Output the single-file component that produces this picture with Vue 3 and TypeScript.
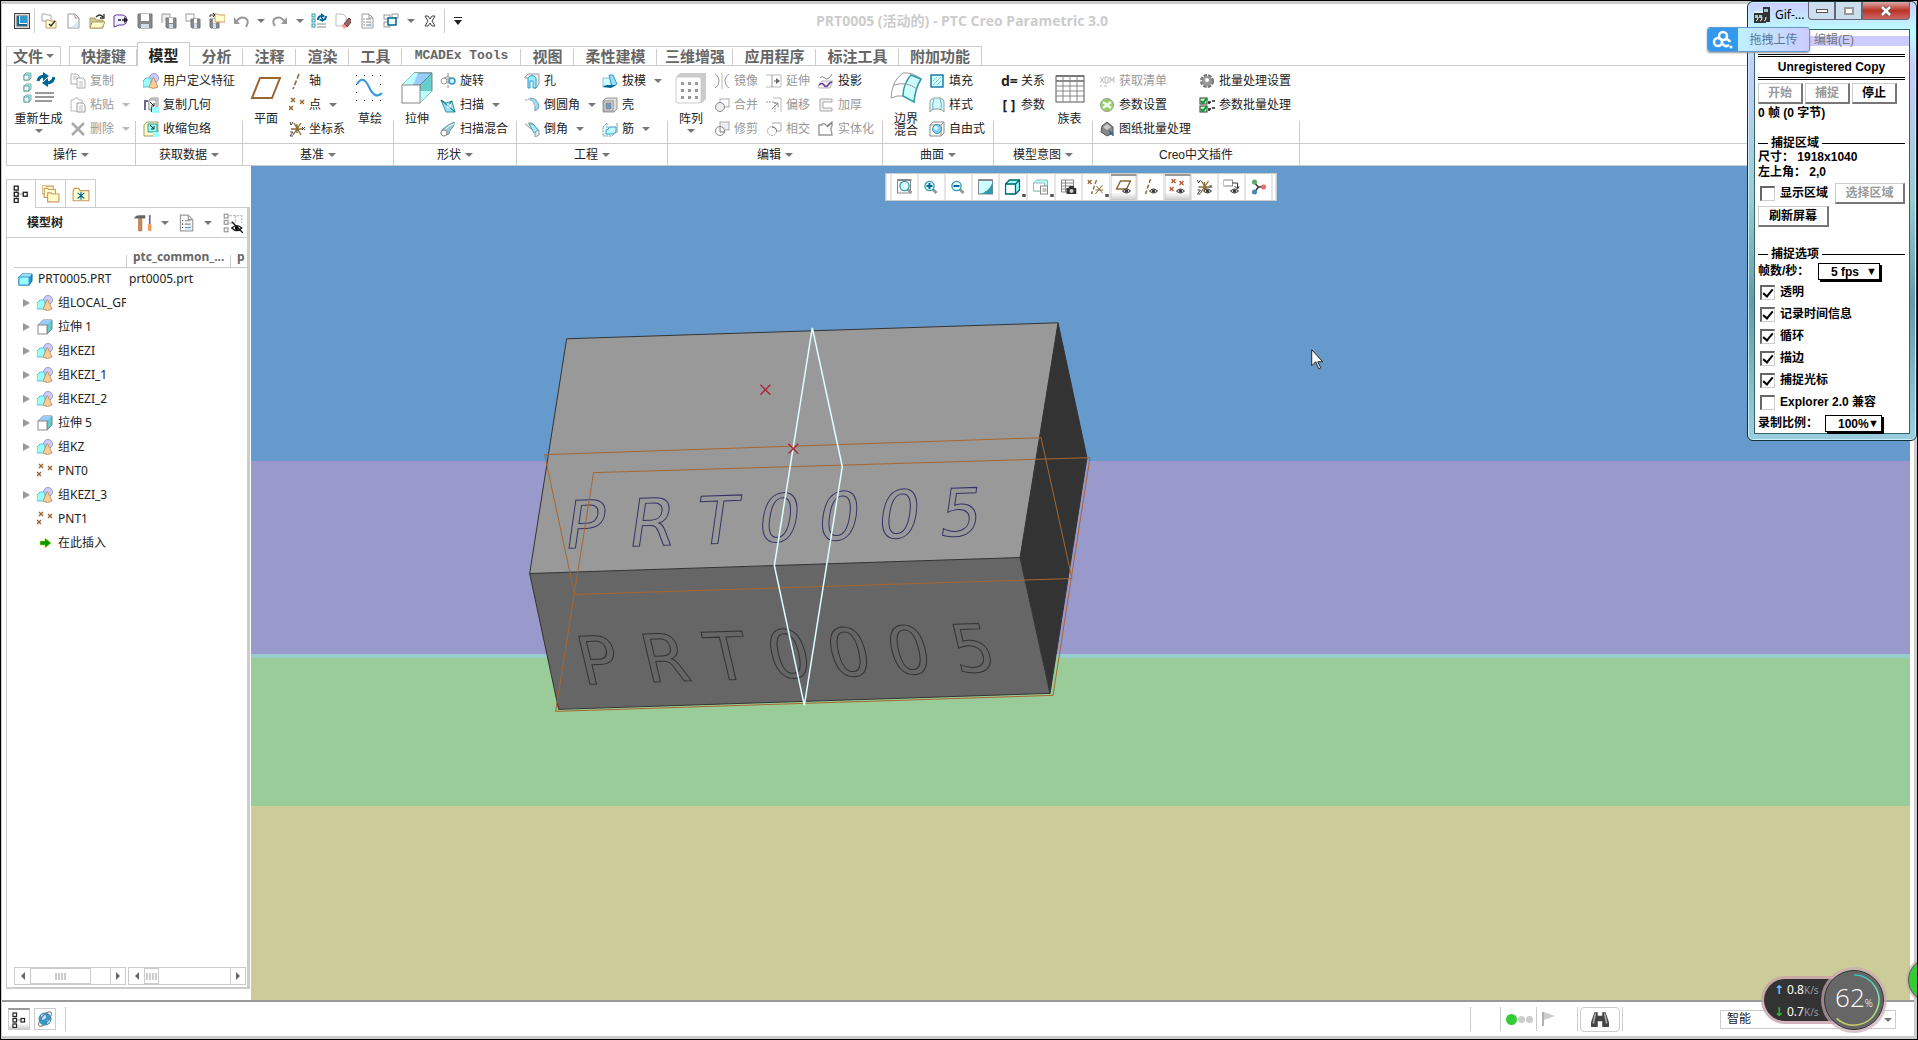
<script setup lang="ts">
import { ref } from 'vue'

/* Inner markup of the icons; small ones use a 16 x 16 box, big ones 32 x 32. */
const cube = (x: number, y: number) =>
  `<path d="M${x} ${y + 2}l2-2h5v5l-2 2h-5z" fill="#9ff" stroke="#8aa"/><rect x="${x}" y="${y + 2}" width="5" height="5" fill="#eff" stroke="#699"/>`
const star = (x: number, y: number, c: string) => `<path d="M${x} ${y}l4 4m0-4l-4 4" stroke="${c}" stroke-width="1.4"/>`
const eye = '<path d="M7 12q4-4 8 0q-4 4-8 0z" fill="#ccc" stroke="#333"/><circle cx="11" cy="12" r="1.6" fill="#333"/>'
const solid =
  '<circle cx="11" cy="5" r="4.5" fill="#ccf" stroke="#99c"/><path d="M0 8l3-3h5v7l-2 2H0z" fill="#9ff" stroke="#6bc"/><path d="M10.500 4l4.500 10q-5 3-9 0z" fill="#fc9" stroke="#b96"/>'
const lens = (x: number) =>
  `<path d="M${x + 3} 10l4 4" stroke="#999" stroke-width="3"/><circle cx="${x}" cy="7" r="4.6" fill="#dff" stroke="#39a" stroke-width="1.3"/>`
const disk = (x: number, y: number, s: number) =>
  `<path d="M${x} ${y}h${s}v${s}h-${s - 1}l-1-1z" fill="#888" stroke="#777"/><rect x="${x + 3}" y="${y}" width="${s - 6}" height="${s / 2}" fill="#fff"/><rect x="${x + 3}" y="${y + s - 4}" width="${s - 6}" height="4" fill="#cde"/>`
const page = '<path d="M3 1h7l4 4v10H3z" fill="#fff" stroke="#999"/><path d="M10 1v4h4" fill="none" stroke="#999"/><path d="M13 8v6.500H6z" fill="#cef"/>'
const folder = (x: number, y: number) => `<path d="M${x} ${y}h3l1 1h6v7h-10z" fill="#ffc" stroke="#c96"/>`
const extrude = '<path d="M1 6l5-5h9v9l-5 5V6z" fill="#6cc" stroke="#688"/><path d="M1 6l5-5h9l-5 5z" fill="#9cf"/><rect x="1" y="6" width="9" height="9" fill="#fff" stroke="#888"/>'
const axes = '<path d="M5 2l7 12M12 2L4 14M2 8h12M8 3v9" stroke="#8a6a33" stroke-width="1.3" fill="none"/><path d="M1 1l1 3l2-3M1 11h3l-3 4h3M13 6l3 3m0-3l-3 3" stroke="#444" fill="none"/>'
const tree = '<path d="M4 4v8M4 8h7" stroke="#999"/><g fill="#fff" stroke="#222" stroke-width="1.200"><rect x="2" y="1" width="3.500" height="3.500"/><rect x="2" y="6.500" width="3.500" height="3.500"/><rect x="2" y="12" width="3.500" height="3.500"/><rect x="10" y="6.500" width="3.500" height="3.500"/></g>'

const icons: Record<string, string> = {
  creo: '<rect x=".5" y=".5" width="15" height="15" fill="#ddd" stroke="#444"/><rect x="3" y="3" width="10" height="10" fill="#069" stroke="#666"/><rect x="6" y="3" width="7" height="7" fill="#39c"/><path d="M5.500 3v7.500H13" stroke="#fff" fill="none"/>',
  folderCheck: '<path d="M1 1h4l1 1h4v6H1z" fill="#fff" stroke="#aaa"/>' + folder(5, 7) + '<path d="M8 11l2 2l4-5" stroke="#333" fill="none" stroke-width="1.500"/>',
  page,
  open: '<path d="M1 5h5l1 2h7v8H1z" fill="#cc9" stroke="#a96"/><path d="M3 9h13l-3 6H1z" fill="#ffc" stroke="#a96"/><path d="M7 4q4-4 7 0m1-3v4h-4" fill="none" stroke="#333" stroke-width="1.300"/>',
  session: '<path d="M1 3q3-2 5-1h4q4 1 4 5t-4 5H6l-5 2z" fill="#eef" stroke="#639"/><path d="M5 7h3m1 0h2" stroke="#222" stroke-width="1.500"/><path d="M11 4l4 3l-4 3z" fill="#222"/>',
  save: disk(1, 1, 14),
  saveAll: '<path d="M1 10V1h8v3" fill="#eee" stroke="#999"/>' + disk(5, 5, 10),
  saveTo: '<rect x="1" y="1" width="8" height="7" fill="#fff" stroke="#999"/>' + disk(6, 6, 9),
  saveOut: disk(1, 6, 9) + folder(6, 1) + '<path d="M1 4V2h4M4 0l2 2l-2 2" stroke="#333" fill="none"/>',
  undo: '<path d="M3 9q4-6 9-4t1 9" stroke="#999" stroke-width="2" fill="none"/><path d="M1 4v7h6z" fill="#999"/>',
  redo: '<path d="M13 9Q9 3 4 5T3 13" stroke="#999" stroke-width="2" fill="none"/><path d="M15 4v7H9z" fill="#999"/>',
  regen: '<g fill="#cff" stroke="#39a"><rect x="1" y="1" width="3" height="3"/><rect x="1" y="6" width="3" height="3"/><rect x="1" y="11" width="3" height="3"/></g><path d="M7 7q0-4 4-4M15 3q0 4-4 4" stroke="#069" stroke-width="2" fill="none"/><path d="M10 0l4 3l-4 3zM12 4l-4 3l4 2z" fill="#069"/><path d="M6 11h9M6 14h9" stroke="#888"/>',
  erase: '<path d="M1 1h7l3 3v4M1 1v12h5" fill="none" stroke="#bbb"/><path d="M14 5l-5 6l3 3l5-6z" fill="#966" stroke="#633"/><path d="M9 11l-3 1l3 4l3-2z" fill="#f99"/>',
  list: page + '<path d="M7 6h5M7 9h5M7 12h5" stroke="#888"/><path d="M4.500 6h1M4.500 9h1M4.500 12h1" stroke="#333"/>',
  windows: '<g fill="#fff" stroke="#999"><rect x="1" y="2" width="6" height="4"/><rect x="9" y="1" width="6" height="4"/><rect x="1" y="9" width="6" height="5"/></g><rect x="5" y="5" width="8" height="7" fill="#eff" stroke="#069" stroke-width="1.500"/>',
  close: '<path d="M3 3h3l2 3l2-3h3l-3 5l3 5h-3l-2-3l-2 3H3l3-5z" fill="#fff" stroke="#444"/>',
  copy: '<g fill="#fff" stroke="#aaa"><path d="M1 1h6l2 2v8H1z"/><path d="M7 5h6l2 2v8H7z"/></g><path d="M3 4h4M3 6h4M9 9h4M9 11h4M9 13h4" stroke="#bbb"/>',
  paste: '<path d="M1 3h3l1-2h3l1 2h3v11H1z" fill="#fff" stroke="#bbb"/><path d="M7 6h6l2 2v7H7z" fill="#fff" stroke="#999"/><path d="M9 9h4M9 11h4M9 13h4" stroke="#bbb"/>',
  del: '<path d="M2 2l12 12M14 2L2 14" stroke="#aaa" stroke-width="2.500"/>',
  solid,
  copyGeo: '<path d="M6 3l2-2h7v10l-2 2H6z" fill="#ddd" stroke="#999"/><path d="M6 3h7v9H6z" fill="#fff" stroke="#999"/><path d="M7 5l4 4m0-3v3H8" stroke="#222" fill="none"/><path d="M9 10h7v6H9z" fill="#9ff"/><path d="M1 3h4v2H3v8H1z" fill="#669"/><path d="M8 10h1v5H8z" fill="#066"/>',
  shrink: '<path d="M1 4l3-3h11v11l-3 3H1z" fill="#ffc" stroke="#996"/><path d="M5 3h9v8H5z" fill="#9ff" stroke="#399"/><path d="M7 4l4 4m0-3v3H8" stroke="#222" fill="none"/><path d="M10 11h6v5h-6z" fill="#9ff"/>',
  axis: '<path d="M10 1L4 16" stroke="#8a6a33" stroke-width="1.600" stroke-dasharray="5 2"/>',
  point: star(2, 1, '#963') + star(11, 3, '#963') + star(0, 9, '#963'),
  csys: axes,
  revolve: '<circle cx="4" cy="8" r="3" fill="#fff" stroke="#999"/><circle cx="12" cy="8" r="3" fill="#cef" stroke="#39c" stroke-width="1.500"/><path d="M8 0v16" stroke="#888" stroke-dasharray="3 1"/><path d="M4 5q4-3 7 0" fill="none" stroke="#999"/>',
  sweep: '<path d="M1 3l5 3l6-2l3 11H6z" fill="#9df" stroke="#399"/><path d="M1 3l7 6l7 6M8 9l4-5" fill="none" stroke="#066"/><rect x="7" y="7" width="4" height="4" fill="#fff" opacity=".6"/>',
  blend: '<path d="M3 15q-4-3 0-7T14 1q1 3-2 6t-3 6z" fill="#9cd" stroke="#699"/><circle cx="4" cy="12" r="3" fill="#fff" stroke="#888"/><path d="M6 8q3-4 8-5" stroke="#fff" fill="none"/>',
  hole: '<path d="M1 4l3-3h11v10l-3 4h-2V5H1z" fill="#eee" stroke="#999"/><path d="M4 5q4-5 8 0v10H9V8H6v7H4z" fill="#9ef" stroke="#39c"/>',
  round: '<path d="M1 3q8-3 10 7v4q4-2 4-5Q13 1 6 1" fill="#9df" stroke="#79a"/><path d="M1 3q8-3 10 7" fill="none" stroke="#ccc"/>',
  chamfer: '<path d="M4 2h4l7 8v4l-4 2v-5L1 3" fill="#dee" stroke="#999"/><path d="M5 3h4l5 6l-4 3z" fill="#9ef" stroke="#69a"/>',
  draft: '<path d="M1 5h8v8H1z" fill="#cff" stroke="#9bc"/><path d="M7 2h4l4 9l-5 3z" fill="#9df" stroke="#39c"/><path d="M0 14l5-2h9l-5 3z" fill="#069"/>',
  shell: '<path d="M1 4l3-3h11v11l-3 3H1z" fill="#ddd" stroke="#999"/><rect x="2" y="4" width="9" height="10" fill="#eee" stroke="#888"/><rect x="4" y="6" width="5" height="6" fill="#69c" stroke="#888"/>',
  rib: '<path d="M1 6l4-4v9h9l-4 4H1z" fill="#eff" stroke="#69a" stroke-dasharray="2 1"/><path d="M4 9q3 0 3-3h7v5l-3 2H4z" fill="#bff" stroke="#39c"/><path d="M15 2v10" stroke="#999"/>',
  mirror: '<path d="M8 0v16" stroke="#bbb"/><path d="M1 1q3 1 4 6v1q0 5-4 7M15 1q-3 1-4 6v1q0 5 4 7" fill="none" stroke="#999"/>',
  merge: '<rect x="6" y="2" width="9" height="8" fill="#fff" stroke="#aaa"/><circle cx="6" cy="10" r="4.500" fill="#eee" stroke="#888"/>',
  trim: '<rect x="6" y="1" width="9" height="8" fill="#eee" stroke="#aaa"/><circle cx="6" cy="10" r="4.500" fill="#fff" stroke="#888"/><path d="M6 6v5h5" fill="none" stroke="#777"/>',
  extend: '<path d="M0 2h15v12H0" fill="none" stroke="#bbb"/><path d="M6 2v12" stroke="#999"/><path d="M8 8h3" stroke="#666"/><path d="M10 5l4 3l-4 3z" fill="#666"/>',
  offset: '<path d="M0 5h9M9 5v10" stroke="#999" stroke-dasharray="2 1" fill="none"/><path d="M7 1h8v14" stroke="#bbb" fill="none"/><path d="M6 12l6-6m-4 0h4v4" fill="none" stroke="#888"/>',
  intersect: '<path d="M6 2h9v8h-4" fill="none" stroke="#aaa"/><circle cx="6" cy="10" r="4.500" fill="none" stroke="#999" stroke-dasharray="2 1"/><path d="M6 6q4 0 5 4" stroke="#777" fill="none"/>',
  project: '<path d="M2 5q2-3 5 0t7-4" fill="none" stroke="#888"/><path d="M0 13l4-5h11l-3 7H1z" fill="#eee" stroke="#bbb"/><path d="M1 12q3-3 5 0t4 0t4-3" fill="none" stroke="#639" stroke-width="1.500"/>',
  thicken: '<path d="M14 2H2v12h12v-3H5V5h9z" fill="#eee" stroke="#aaa"/>',
  solidify: '<path d="M1 4h3q0-2 3-1l2 2l5-4v4q-1 1-1 3l1 6H1z" fill="#fff" stroke="#999" stroke-width="1.400"/><path d="M9 6l5-4" stroke="#666"/>',
  fill: '<rect x="2" y="2" width="12" height="12" fill="#cff" stroke="#069" stroke-width="1.300"/><path d="M4 8l4-4M4 12l8-8M8 12l4-4" stroke="#9cd"/>',
  style: '<path d="M1 5q0-3 4-4h6q4 1 4 4v10q-2-3-5-3H6q-4 0-5 3z" fill="#cff" stroke="#999"/><path d="M5 2q-2 5-1 10M11 2q2 5 1 10" stroke="#7ac" fill="none"/>',
  free: '<path d="M1 4l3-3h11v11l-3 3H1zM1 4h11v11M12 4l3-3" fill="none" stroke="#888"/><circle cx="8" cy="8" r="4.500" fill="#8cf" stroke="#39a"/><circle cx="7" cy="7" r="2" fill="#dff"/>',
  bom: '<path d="M1 4l4 6m0-6l-4 6M6 4v6h3V4H6M11 10V4l2 4l2-4v6M1 13h2m2 0h3" stroke="#bbb" fill="none"/>',
  ball: '<circle cx="8" cy="8" r="6.500" fill="#9c6" stroke="#999"/><path d="M4 5l8 6M12 5l-8 6" stroke="#efe" stroke-width="2.500"/>',
  plot: '<path d="M3 5l5-4l6 5v6l-6 3l-6-4z" fill="#888" stroke="#555"/><path d="M4 6l4-3l4 3l-4 3z" fill="#ccc"/><path d="M10 10l4 3m-4 0h4v2" stroke="#369" stroke-width="1.500" fill="none"/>',
  gear: '<circle cx="8" cy="8" r="5" fill="#aaa" stroke="#777" stroke-width="4" stroke-dasharray="3 1"/><circle cx="8" cy="8" r="5" fill="#999"/><circle cx="8" cy="7" r="2" fill="#fff"/>',
  checks: '<rect x="1" y="1" width="7" height="6" fill="#cfc" stroke="#333"/><rect x="1" y="9" width="7" height="6" fill="#cfc" stroke="#333"/><path d="M2 4l2 2l4-5M2 12l2 2l4-5" stroke="#093" stroke-width="2" fill="none"/><path d="M9 5h3m1-1h3M9 12h3m1-1h3M10 7v-2M10 14v-2" stroke="#222" stroke-width="1.500"/>',
  zoomFit: '<rect x="1" y="1" width="13" height="13" fill="#fff" stroke="#888"/><path d="M1 1h14" stroke="#888" stroke-width="2"/>' + lens(8),
  zoomIn: lens(6) + '<path d="M3 7h6M6 4v6" stroke="#069" stroke-width="2"/>',
  zoomOut: lens(6) + '<path d="M3 7h6" stroke="#069" stroke-width="2"/>',
  repaint: '<rect x="1" y="1" width="14" height="14" fill="#cff" stroke="#888"/><path d="M15 3v12H2q5-1 6-3h1q4-3 6-9z" fill="#39a"/><path d="M1 1h14" stroke="#888" stroke-width="2"/>',
  shade: '<path d="M1 5l4-4h10v10l-4 4H1z" fill="#9ff" stroke="#066" stroke-width="1.300"/><path d="M1 5h10v10M11 5l4-4" fill="none" stroke="#066" stroke-width="1.300"/><rect x="2" y="6" width="8" height="8" fill="#fff"/>',
  savedView: '<path d="M1 4l3-3h11v11H1z" fill="#bff" stroke="#9bb"/><path d="M1 4h11v8H1z" fill="#fff" stroke="#9bb"/><rect x="8" y="7" width="7" height="8" fill="#fff" stroke="#888"/><path d="M10 10h4M10 12h4" stroke="#888"/>',
  viewMgr: '<path d="M1 1h12v12H1zM1 4h12M1 7h12M1 10h7M5 1v12" fill="#fff" stroke="#888"/><path d="M6 9h2l1-2h4l1 2h2v6H6z" fill="#333"/><circle cx="11" cy="12" r="2" fill="#ccc"/>',
  datums: star(0, 1, '#963') + '<path d="M9 1L4 15" stroke="#963" stroke-width="1.400" stroke-dasharray="4 2"/><path d="M9 7l6 7M15 6l-7 9M8 11h8" stroke="#8a6a33"/>',
  planeEye: '<path d="M5 2h10l-4 8H1z" fill="#fff" stroke="#8a6a33" stroke-width="1.500"/>' + eye,
  axisEye: '<path d="M8 0L3 15" stroke="#8a6a33" stroke-width="1.500" stroke-dasharray="4 2"/>' + eye,
  pointEye: star(2, 0, '#b53') + star(10, 2, '#b53') + star(0, 8, '#b53') + eye,
  csysEye: axes + eye,
  noteEye: '<rect x="0" y="1" width="9" height="6" fill="#fff" stroke="#888"/><path d="M9 4h5v5m-3-2l3 3l2-3" stroke="#333" fill="none"/>' + eye,
  spin: '<path d="M4 4l4 4h5M8 8l-4 5" stroke="#333" stroke-width="1.500" fill="none"/><circle cx="4" cy="3" r="2.500" fill="#5a6"/><circle cx="13" cy="8" r="2.500" fill="#e66"/><circle cx="4" cy="13" r="2.500" fill="#48b"/>',
  tree,
  folders: folder(0, 0) + folder(2, 3) + folder(5, 7),
  favorites: '<path d="M1 5l1-2h4l1 2h8v9H1z" fill="#ffc" stroke="#c96"/><path d="M8 6v7M5 7l6 5M11 7l-6 5" stroke="#069"/>',
  tools: '<path d="M4 4h3v11H4z" fill="#c85" stroke="#963" stroke-width=".5"/><path d="M0 4q1-3 5-3h5v3H5z" fill="#666"/><path d="M14 1v8" stroke="#669" stroke-width="1.500"/><path d="M12.500 9h3v6h-3z" fill="#e95"/>',
  hideTree: '<g fill="#fff" stroke="#999"><rect x="1" y="1" width="3" height="3"/><rect x="1" y="6" width="3" height="3"/><rect x="1" y="12" width="3" height="3"/></g><path d="M5 2h10v6M10 2v6M5 8h5" stroke="#bbb" stroke-dasharray="2 1" fill="none"/><path d="M7 12q4-4 8 0q-4 4-8 0zM7 7l9 9" stroke="#111" fill="none"/><circle cx="11" cy="12" r="1.500"/>',
  part: '<path d="M2 6l3-3h10v7l-3 4H2z" fill="#39c" stroke="#069"/><path d="M2 6l3-3h10l-3 3z" fill="#9df"/><rect x="2" y="6" width="10" height="8" fill="#9ff" stroke="#39c"/>',
  extrude,
  insert: '<path d="M3 6h5V3l6 5l-6 5v-3H3z" fill="#090" stroke="#cc3" stroke-width=".6"/>',
  globe: '<circle cx="8" cy="8" r="6.500" fill="#39c"/><path d="M4 4q4-2 5 1t-4 4zM10 9q3-1 3 1t-3 3z" fill="#bdf"/><ellipse cx="8" cy="8" rx="9" ry="3.500" fill="none" stroke="#777" transform="rotate(-50 8 8)"/>',
  binocular: '<path d="M3 2h3v3h4V2h3l3 9v4h-6v-5H6v5H0v-4z" fill="#444"/><path d="M4 3l-2 9M12 3l2 9" stroke="#aaa" stroke-width="1.500"/>',
  flag: '<path d="M2 1v14" stroke="#999" stroke-width="1.500"/><path d="M3 1l11 4l-11 4z" fill="#ccc"/>',
}

const bigIcons: Record<string, string> = {
  regen: cube(1, 1) + cube(1, 12) + cube(1, 23) + '<path d="M15 9q1-5 7-5M31 5q-1 6-8 6" stroke="#069" stroke-width="3" fill="none"/><path d="M20 0l6 4l-6 5zM25 6l-6 5l6 4z" fill="#069"/><path d="M12 21h19M12 25h19M12 29h17" stroke="#999" stroke-width="2"/>',
  plane: '<path d="M10 6h20l-8 20H2z" fill="#fff" stroke="#963" stroke-width="2"/>',
  sketch: '<g fill="#333"><path d="M2 3h1v1H2zM10 3h1v1h-1zM18 3h1v1h-1zM26 3h1v1h-1zM2 12h1v1H2zM26 12h1v1h-1zM2 20h1v1H2zM2 28h1v1H2zM10 28h1v1h-1zM18 28h1v1h-1zM26 28h1v1h-1z"/></g><path d="M3 12q6-10 12 3t13 6" fill="none" stroke="#39d" stroke-width="2"/>',
  extrude: '<path d="M1 13L13 1h18v18L19 31V13z" fill="#6cc" stroke="#688"/><path d="M1 13L13 1h18L19 13z" fill="#9cf" stroke="#688"/><path d="M19 31l12-12l-12 0z" fill="#bff"/><path d="M1 13L13 1l4 0L12 13z" fill="#bff"/><rect x="1" y="13" width="18" height="18" fill="#fff" stroke="#888"/>',
  pattern: '<path d="M1 5l4-4h26v26l-4 4H1z" fill="#ccc"/><rect x="1" y="5" width="25" height="26" rx="2" fill="#fff" stroke="#ccc"/><path d="M6 10h3v3H6zM13 10h3v3h-3zM20 10h3v3h-3zM6 17h3v3H6zM13 17h3v3h-3zM20 17h3v3h-3zM6 24h3v3H6zM13 24h3v3h-3zM20 24h3v3h-3z" fill="#999"/>',
  boundary: '<path d="M1 26Q2 8 13 1q10-1 18 6q-6 10-7 23q-10-10-23-4z" fill="#fff" stroke="#999"/><path d="M21 3l10 4q-6 10-7 23L13 24Q13 12 21 3z" fill="#cff" stroke="#39a" stroke-width="1.500"/><path d="M4 13q13-4 23 4" fill="none" stroke="#999"/>',
  family: '<rect x="2" y="4" width="28" height="26" fill="#fff" stroke="#555"/><path d="M2 9h28M2 4h28" stroke="#666" stroke-width="1.500"/><path d="M2 14h28M2 19h28M2 24h28M9 4v26M16 4v26M23 4v26" stroke="#888"/>',
}

interface Item { icon?: string; glyph?: string; text: string; menu?: boolean; off?: boolean }
interface Col { w: number; big?: Item; items?: Item[] }
interface Group { name: string; w: number; menu: boolean; cols: Col[] }

const groups: Group[] = [
  { name: '操作', w: 130, menu: true, cols: [
    { w: 63, big: { icon: 'regen', text: '重新生成', menu: true } },
    { w: 66, items: [{ icon: 'copy', text: '复制', off: true }, { icon: 'paste', text: '粘贴', menu: true, off: true }, { icon: 'del', text: '删除', menu: true, off: true }] }] },
  { name: '获取数据', w: 107, menu: true, cols: [
    { w: 7 },
    { w: 99, items: [{ icon: 'solid', text: '用户定义特征' }, { icon: 'copyGeo', text: '复制几何' }, { icon: 'shrink', text: '收缩包络' }] }] },
  { name: '基准', w: 151, menu: true, cols: [
    { w: 46, big: { icon: 'plane', text: '平面' } },
    { w: 58, items: [{ icon: 'axis', text: '轴' }, { icon: 'point', text: '点', menu: true }, { icon: 'csys', text: '坐标系' }] },
    { w: 46, big: { icon: 'sketch', text: '草绘' } }] },
  { name: '形状', w: 123, menu: true, cols: [
    { w: 46, big: { icon: 'extrude', text: '拉伸' } },
    { w: 76, items: [{ icon: 'revolve', text: '旋转' }, { icon: 'sweep', text: '扫描', menu: true }, { icon: 'blend', text: '扫描混合' }] }] },
  { name: '工程', w: 151, menu: true, cols: [
    { w: 7 },
    { w: 78, items: [{ icon: 'hole', text: '孔' }, { icon: 'round', text: '倒圆角', menu: true }, { icon: 'chamfer', text: '倒角', menu: true }] },
    { w: 65, items: [{ icon: 'draft', text: '拔模', menu: true }, { icon: 'shell', text: '壳' }, { icon: 'rib', text: '筋', menu: true }] }] },
  { name: '编辑', w: 215, menu: true, cols: [
    { w: 46, big: { icon: 'pattern', text: '阵列', menu: true } },
    { w: 52, items: [{ icon: 'mirror', text: '镜像', off: true }, { icon: 'merge', text: '合并', off: true }, { icon: 'trim', text: '修剪', off: true }] },
    { w: 52, items: [{ icon: 'extend', text: '延伸', off: true }, { icon: 'offset', text: '偏移', off: true }, { icon: 'intersect', text: '相交', off: true }] },
    { w: 62, items: [{ icon: 'project', text: '投影' }, { icon: 'thicken', text: '加厚', off: true }, { icon: 'solidify', text: '实体化', off: true }] }] },
  { name: '曲面', w: 111, menu: true, cols: [
    { w: 46, big: { icon: 'boundary', text: '边界混合' } },
    { w: 64, items: [{ icon: 'fill', text: '填充' }, { icon: 'style', text: '样式' }, { icon: 'free', text: '自由式' }] }] },
  { name: '模型意图', w: 99, menu: true, cols: [
    { w: 7 },
    { w: 46, items: [{ glyph: 'd=', text: '关系' }, { glyph: '[ ]', text: '参数' }] },
    { w: 45, big: { icon: 'family', text: '族表' } }] },
  { name: 'Creo中文插件', w: 207, menu: false, cols: [
    { w: 6 },
    { w: 100, items: [{ icon: 'bom', text: '获取清单', off: true }, { icon: 'ball', text: '参数设置' }, { icon: 'plot', text: '图纸批量处理' }] },
    { w: 99, items: [{ icon: 'gear', text: '批量处理设置' }, { icon: 'checks', text: '参数批量处理' }] }] },
]

const tabs: { name: string; w: number }[] = [
  { name: '快捷键', w: 68 }, { name: '模型', w: 53 }, { name: '分析', w: 53 }, { name: '注释', w: 53 },
  { name: '渲染', w: 53 }, { name: '工具', w: 53 }, { name: 'MCADEx Tools', w: 119 }, { name: '视图', w: 53 },
  { name: '柔性建模', w: 83 }, { name: '三维增强', w: 76 }, { name: '应用程序', w: 83 }, { name: '标注工具', w: 83 },
  { name: '附加功能', w: 83 },
]
const activeTab = ref('模型')

const quick = ['folderCheck', 'page', 'open', 'session', 'save', 'saveAll', 'saveTo', 'saveOut', 'undo', '▾', 'redo', '▾', 'regen', 'erase', 'list', 'windows', '▾', 'close']
const viewTools = [
  { icon: 'zoomFit' }, { icon: 'zoomIn' }, { icon: 'zoomOut' }, { icon: 'repaint' },
  { icon: 'shade', menu: true }, { icon: 'savedView', menu: true }, { icon: 'viewMgr' }, { icon: 'datums', menu: true },
  { icon: 'planeEye', on: true }, { icon: 'axisEye' }, { icon: 'pointEye', on: true }, { icon: 'csysEye' },
  { icon: 'noteEye' }, { icon: 'spin' },
]
const features = [
  { icon: 'solid', text: '组LOCAL_GF', open: true }, { icon: 'extrude', text: '拉伸 1', open: true },
  { icon: 'solid', text: '组KEZI', open: true }, { icon: 'solid', text: '组KEZI_1', open: true },
  { icon: 'solid', text: '组KEZI_2', open: true }, { icon: 'extrude', text: '拉伸 5', open: true },
  { icon: 'solid', text: '组KZ', open: true }, { icon: 'point', text: 'PNT0', open: false },
  { icon: 'solid', text: '组KEZI_3', open: true }, { icon: 'point', text: 'PNT1', open: false },
  { icon: 'insert', text: '在此插入', open: false },
]
const bands = [
  { c: 'sky', h: 295 }, { c: 'violet', h: 194 }, { c: 'edge', h: 4 }, { c: 'green', h: 148 }, { c: 'sand', h: 194 },
]
const options = ref([
  { text: '透明', on: true }, { text: '记录时间信息', on: true }, { text: '循环', on: true },
  { text: '描边', on: true }, { text: '捕捉光标', on: true }, { text: 'Explorer 2.0 兼容', on: false },
])
const showArea = ref(false)
</script>

<template>
  <div class="app">
    <header class="title">
      <div class="quick">
        <button class="ic"><svg viewBox="0 0 16 16" v-html="icons.creo" /></button>
        <i class="bar" />
        <template v-for="(q, i) in quick" :key="i">
          <button v-if="q === '▾'" class="drop"><i class="caret" /></button>
          <button v-else class="ic"><svg viewBox="0 0 16 16" v-html="icons[q]" /></button>
        </template>
        <i class="bar" />
        <button class="more"><i class="caret" /></button>
      </div>
      <h1>PRT0005 (活动的) - PTC Creo Parametric 3.0</h1>
      <span />
    </header>

    <nav class="tabs">
      <button class="file">文件<i class="caret" /></button>
      <span class="gap" />
      <button
        v-for="t in tabs" :key="t.name" class="tab"
        :class="{ active: t.name === activeTab, latin: t.name.startsWith('M') }"
        :style="{ width: t.w + 'px' }" @click="activeTab = t.name"
      >{{ t.name }}</button>
      <span class="rest" />
    </nav>

    <div class="ribbon">
      <section v-for="g in groups" :key="g.name" class="group" :style="{ width: g.w + 'px' }">
        <div class="cols">
          <div v-for="(c, i) in g.cols" :key="i" class="col" :style="{ width: c.w + 'px' }">
            <button v-if="c.big" class="big" :class="{ wrap: c.big.icon === 'boundary' }">
              <svg viewBox="0 0 32 32" v-html="bigIcons[c.big.icon!]" />
              <span>{{ c.big.text }}</span>
              <i v-if="c.big.menu" class="caret" />
            </button>
            <button v-for="s in c.items" :key="s.text" class="small" :class="{ off: s.off }">
              <svg v-if="s.icon" viewBox="0 0 16 16" v-html="icons[s.icon]" />
              <b v-else>{{ s.glyph }}</b>
              <span>{{ s.text }}</span>
              <i v-if="s.menu" class="caret" />
            </button>
          </div>
        </div>
        <button class="label">{{ g.name }}<i v-if="g.menu" class="caret" /></button>
      </section>
      <div class="filler" />
    </div>

    <main>
      <aside>
        <div class="ptabs">
          <button class="on"><svg viewBox="0 0 16 16" v-html="icons.tree" /></button>
          <button><svg viewBox="0 0 16 16" v-html="icons.folders" /></button>
          <button><svg viewBox="0 0 16 16" v-html="icons.favorites" /></button>
          <span />
        </div>
        <div class="panel">
          <div class="phead">
            <strong>模型树</strong>
            <button class="pic"><svg viewBox="0 0 16 16" v-html="icons.tools" /></button>
            <button class="drop"><i class="caret" /></button>
            <button class="pic"><svg viewBox="0 0 16 16" v-html="icons.list" /></button>
            <button class="drop"><i class="caret" /></button>
            <button class="pic hide"><svg viewBox="0 0 16 16" v-html="icons.hideTree" /></button>
          </div>
          <div class="treebox">
            <table>
              <colgroup><col class="c1"><col class="c2"><col></colgroup>
              <thead><tr><th /><th>ptc_common_...</th><th>p</th></tr></thead>
              <tbody>
                <tr>
                  <td><div class="node root"><svg viewBox="0 0 16 16" v-html="icons.part" />PRT0005.PRT</div></td>
                  <td class="val">prt0005.prt</td><td />
                </tr>
                <tr v-for="f in features" :key="f.text">
                  <td><div class="node"><i class="twist" :class="{ none: !f.open }" /><svg viewBox="0 0 16 16" v-html="icons[f.icon]" />{{ f.text }}</div></td>
                  <td /><td />
                </tr>
              </tbody>
            </table>
          </div>
          <div class="scrolls">
            <div class="scroll one"><button class="l" /><span class="thumb"><i /><i /><i /><i /></span><button class="r" /></div>
            <div class="scroll two"><button class="l" /><span class="thumb"><i /><i /><i /><i /></span><button class="r" /></div>
          </div>
        </div>
      </aside>

      <div class="view">
        <div v-for="b in bands" :key="b.c" :class="b.c" :style="{ flexGrow: b.h }" />
        <svg class="scene" viewBox="251 166 1659 835">
          <path d="M566 339L1058 323L1020 558L529 574z" fill="#999" />
          <path d="M529 574L1020 558L1050 694L558 710z" fill="#666" />
          <path d="M1058 323L1087 458L1050 694L1020 558z" fill="#333" />
          <path d="M566 339L1058 323L1087 458L1050 694L558 710L529 574zM529 574L1020 558L1058 323M1020 558L1050 694" fill="none" stroke="#333" />
          <g class="cad">
            <text transform="matrix(1 -.032 -.142 1 562 549)" x="0 64 132 193 253 313 375" y="0">PRT0005</text>
            <text class="low" transform="matrix(1 -.032 .235 1 583 685)" x="0 64 129 190 250 310 374" y="0">PRT0005</text>
          </g>
          <path d="M544 455L1041 438L1072 579L574 595zM593 473L1090 458L1053 696L555 712z" fill="none" stroke="#a86630" />
          <path d="M812 328L842 467L804 706L774 566z" fill="none" stroke="#dff" stroke-width="1.500" />
          <path d="M760 385l10 10m0-10l-10 10M788 444l10 10m0-10l-10 10" stroke="#a23" stroke-width="1.300" />
          <path d="M1312 350v16l4-4l3 7l2-1l-3-6h5z" fill="#fff" stroke="#222" />
        </svg>
        <div class="vtools">
          <i class="grip" />
          <button v-for="v in viewTools" :key="v.icon" :class="{ on: v.on, menu: v.menu }"><svg viewBox="0 0 16 16" v-html="icons[v.icon]" /></button>
          <i class="grip" />
        </div>
      </div>
    </main>

    <footer>
      <button class="sbtn on"><svg viewBox="0 0 16 16" v-html="icons.tree" /></button>
      <button class="sbtn"><svg viewBox="0 0 16 16" v-html="icons.globe" /></button>
      <i class="bar" />
      <span class="push" />
      <i class="bar" /><span class="cell" />
      <i class="bar" /><span class="cell lights"><i /><i /><i /></span>
      <i class="bar" /><span class="cell flag"><svg viewBox="0 0 16 16" v-html="icons.flag" /></span>
      <i class="bar" /><button class="find"><svg viewBox="0 0 16 16" v-html="icons.binocular" /></button>
      <i class="bar" />
      <span class="filter">
        <select aria-label="过滤器"><option>智能</option></select>
        <i class="caret" />
      </span>
    </footer>

    <div class="gif">
      <div class="gtitle">
        <svg viewBox="0 0 16 16"><path d="M9 0h7v15H9zM0 6h12v10H0z" fill="#333" /><path d="M1 8h3v3H1zM5 8h3v3H5zM10 2h4v3h-4z" fill="#9cc" /><path d="M0 5h9M2 14q2 0 2-4M6 14q2 0 2-4M10 14q2 0 2-4" stroke="#fff" fill="none" /></svg>
        <span>Gif-...</span>
        <div class="wbtns">
          <button aria-label="最小化"><i class="min" /></button><button aria-label="最大化"><i class="max" /></button>
          <button class="x" aria-label="关闭"><svg viewBox="0 0 12 12"><path d="M2 2l8 8M10 2l-8 8" stroke="#555" stroke-width="4" /><path d="M2 2l8 8M10 2l-8 8" stroke="#fff" stroke-width="2.500" /></svg></button>
        </div>
      </div>
      <div class="client">
        <div class="gmenu"><a href="#">编辑(E)</a></div>
        <div class="gbody">
          <div class="reg">Unregistered Copy</div>
          <div class="btns"><button disabled>开始</button><button disabled>捕捉</button><button>停止</button></div>
          <div class="frames">0 帧 (0 字节)</div>
          <div class="legend">捕捉区域</div>
          <div class="line">尺寸： 1918x1040</div>
          <div class="line">左上角： 2,0</div>
          <div class="area">
            <label><input v-model="showArea" type="checkbox">显示区域</label>
            <button disabled>选择区域</button>
          </div>
          <button class="refresh">刷新屏幕</button>
          <div class="legend second">捕捉选项</div>
          <div class="pick">
            <label for="fps">帧数/秒：</label>
            <span class="sel"><select id="fps"><option>5 fps</option></select><i>▼</i></span>
          </div>
          <label v-for="o in options" :key="o.text" class="opt"><input v-model="o.on" type="checkbox">{{ o.text }}</label>
          <div class="pick scale">
            <label for="scale">录制比例：</label>
            <span class="sel"><select id="scale"><option>100%</option></select><i>▼</i></span>
          </div>
        </div>
      </div>
    </div>

    <button class="upload">
      <span class="cloud"><svg viewBox="0 0 24 20"><g fill="none" stroke="#fff" stroke-width="2.500"><circle cx="12" cy="6" r="4" /><circle cx="7" cy="12" r="4" /><path d="M14 9q4 0 5 3M11 13q3 5 7 2" /></g><circle cx="20" cy="17" r="1.500" fill="#fff" /></svg></span>
      <span class="txt">拖拽上传</span>
    </button>

    <div class="net">
      <div class="rates">
        <div><i class="up">↑</i>0.8<small>K/s</small></div>
        <div><i class="down">↓</i>0.7<small>K/s</small></div>
      </div>
      <div class="dial">
        <svg viewBox="0 0 60 60"><defs><linearGradient id="arc" x1="0" y1="0" x2="0" y2="1"><stop offset="0" stop-color="#3cc" /><stop offset=".6" stop-color="#9e9" /><stop offset="1" stop-color="#cc6" /></linearGradient></defs><path d="M30 4A26 26 0 1 1 12 49" fill="none" stroke="url(#arc)" stroke-width="1.500" /></svg>
        <span>62<small>%</small></span>
      </div>
    </div>
    <div class="blob" />
  </div>
</template>

<style>
body { overflow: hidden; }
</style>

<style scoped>
* { box-sizing: border-box; }
.app {
  position: relative; height: 100vh; display: flex; flex-direction: column; overflow: hidden;
  background: #fff; border: 1px solid #000; box-shadow: inset 0 3px 0 #ccc, inset 1px 0 0 #ccc, inset -3px -3px 0 #ccc;
  padding: 3px 7px 3px 1px; font: 12px/16px "Liberation Sans", "Noto Sans CJK SC", sans-serif; color: #222;
}
button { padding: 0; margin: 0; border: 0; background: none; font: inherit; color: inherit; }
svg { display: block; flex: none; }
.caret { flex: none; width: 0; height: 0; border: 4px solid transparent; border-top-color: #777; border-bottom: 0; }
.bar { width: 1px; height: 24px; background: #ccc; flex: none; }

.title { display: grid; grid-template-columns: 1fr auto 1fr; align-items: center; height: 33px; padding-left: 12px; flex: none; }
.quick { display: flex; align-items: center; }
.quick .ic { width: 16px; margin-right: 8px; }
.quick .ic:first-child { margin-right: 4px; }
.quick .bar:nth-child(2) { margin-right: 6px; }
.quick .drop { width: 8px; margin-right: 7px; }
.quick .drop .caret { display: block; }
.quick .more { margin-left: 9px; padding-top: 2px; border-top: 1px solid #222; }
.quick .more .caret { display: block; border-top-color: #222; border-top-width: 5px; }
.quick .bar:nth-last-child(2) { margin-left: -2px; }
h1 { margin: 0; font: bold 14px/18px "Open Sans", "Noto Sans CJK SC", sans-serif; color: #ccc; }

.tabs { display: flex; align-items: flex-end; height: 29px; padding-left: 4px; flex: none; font: bold 15px/18px "Noto Sans CJK SC", sans-serif; color: #666; }
.file, .tab { height: 20px; border: solid #ccc; border-width: 1px 0; background: linear-gradient(#ccc, #ccc) right bottom / 1px 16px no-repeat; }
.file { width: 55px; display: flex; align-items: center; justify-content: center; gap: 3px; border-width: 1px; background: none; }
.gap { width: 8px; border-bottom: 1px solid #ccc; }
.tab:nth-child(3) { border-left-width: 1px; }
.tab:nth-last-child(2) { border-right-width: 1px; background: none; }
.tab.latin { font: bold 13px/18px "Liberation Mono", monospace; }
.tab.active { height: 24px; border-width: 1px 1px 0; color: #222; background: #fff; }
.rest { flex: 1; border-bottom: 1px solid #ccc; }

.ribbon { display: flex; flex: none; padding-left: 4px; height: 100px; }
.group { flex: none; display: flex; flex-direction: column; border-bottom: 1px solid #ccc; }
.group:first-child { border-left: 1px solid #ccc; }
.cols { display: flex; height: 77px; padding-top: 3px; background: linear-gradient(#ccc, #ccc) right bottom / 1px 22px no-repeat; }
.col { flex: none; white-space: nowrap; }
.small { display: flex; align-items: center; height: 24px; gap: 4px; }
.small svg { width: 16px; height: 16px; }
.small b { width: 16px; font: bold 14px/16px "Noto Sans", sans-serif; white-space: nowrap; }
.small .caret { margin-left: 4px; }
.small.off { color: #999; }
.small.off .caret { border-top-color: #bbb; }
.big { width: 100%; display: flex; flex-direction: column; align-items: center; padding-top: 3px; line-height: 12px; }
.big svg { width: 32px; height: 32px; margin-bottom: 9px; }
.big span { max-width: 48px; white-space: normal; }
.big.wrap span { max-width: 24px; }
.big .caret { margin-top: 4px; }
.label { display: flex; align-items: center; justify-content: center; gap: 4px; height: 22px; border: solid #ccc; border-width: 1px 1px 0 0; }
.filler { flex: 1; background: linear-gradient(#ccc, #ccc) 0 77px / 100% 1px no-repeat; border-bottom: 1px solid #ccc; margin-right: -4px; }

main { flex: 1; display: flex; min-height: 0; }
aside { width: 249px; flex: none; display: flex; flex-direction: column; padding: 13px 1px 11px 4px; }
.ptabs { display: flex; height: 29px; }
.ptabs button { width: 30px; border: 1px solid #ccc; border-left-width: 0; display: grid; place-items: center; }
.ptabs button.on { border-left-width: 1px; border-bottom: 0; }
.ptabs svg { width: 18px; height: 18px; }
.ptabs span { flex: 1; border-bottom: 1px solid #ccc; }
.panel { flex: 1; display: flex; flex-direction: column; min-height: 0; border: solid #ccc; border-width: 0 3px 2px 1px; }
.phead { display: flex; align-items: center; height: 30px; padding-left: 20px; border-bottom: 1px solid #ccc; flex: none; }
.phead strong { width: 107px; }
.pic svg { width: 18px; height: 18px; }
.pic.hide { margin-left: 3px; }
.pic.hide svg { width: 20px; height: 20px; }
.phead .drop { width: 25px; display: flex; justify-content: center; }
.treebox { flex: 1; overflow: hidden; padding-left: 7px; font-family: "Noto Sans", "Noto Sans CJK SC", sans-serif; }
table { table-layout: fixed; width: 100%; border-collapse: collapse; }
.c1 { width: 112px; }
.c2 { width: 104px; }
th { height: 29px; padding: 9px 0 0 7px; text-align: left; white-space: nowrap; color: #666; border-bottom: 1px solid #ccc; background: linear-gradient(#ccc, #ccc) left bottom / 1px 12px no-repeat; }
th:first-child { background: none; }
td { height: 24px; padding: 0; overflow: hidden; white-space: nowrap; }
td.val { padding-left: 3px; }
.node { display: flex; align-items: center; gap: 5px; padding-left: 9px; }
.node svg { width: 16px; height: 16px; }
.node.root { padding-left: 3px; }
.node .twist { flex: none; width: 7px; height: 0; border: 4px solid transparent; border-left: 7px solid #999; border-right: 0; margin-right: 2px; }
.node .twist.none { visibility: hidden; }
.scrolls { display: flex; gap: 2px; margin: 0 1px 2px 7px; height: 18px; }
.scroll { flex: 0 1 118px; display: flex; border: 1px solid #ccc; }
.scroll.one { flex: 0 0 112px; }
.scroll button { width: 15px; display: grid; place-items: center; }
.scroll button::before { content: ""; border: 4px solid transparent; }
.scroll .l::before { border-right-color: #666; border-left: 0; }
.scroll .r::before { border-left-color: #666; border-right: 0; }
.scroll .r { margin-left: auto; border-left: 1px solid #ccc; }
.thumb { display: flex; align-items: center; justify-content: center; gap: 1px; width: 61px; border: 1px solid #ccc; }
.two .thumb { width: 15px; }
.thumb i { width: 2px; height: 7px; background: #ccc; }

.view { flex: 1; position: relative; display: flex; flex-direction: column; min-width: 0; overflow: hidden; }
.view > div:not(.vtools) { flex: 0 1 0; }
.sky { background: #69c; } .violet { background: #99c; } .edge { background: #9cc; } .green { background: #9c9; } .sand { background: #cc9; }
.scene { position: absolute; inset: 0; width: 100%; height: 100%; }
.cad text { font: 66px "DejaVu Sans", sans-serif; fill: none; stroke: #336; stroke-width: 1px; }
.cad .low { stroke: #333; }
.vtools { position: absolute; top: 7px; left: 50%; transform: translateX(-50%); display: flex; height: 28px; background: #fff; border: 1px solid #ccc; }
.vtools .grip { width: 4px; }
.vtools button { position: relative; width: 27px; border-left: 1px solid #ccc; display: grid; place-items: center; }
.vtools button.menu { width: 28px; }
.vtools button.menu::after { content: ""; position: absolute; right: 1px; bottom: 3px; border: 3px solid transparent; border-right-color: #555; border-bottom-color: #555; border-top-width: 0; border-left-width: 0; }
.vtools button.on { background: linear-gradient(#fff 70%, #ccc); box-shadow: inset 0 2px 0 #999, inset 0 0 0 1px #ccc; }
.vtools svg { width: 16px; height: 16px; }
.vtools .grip:last-child { border-left: 1px solid #ccc; }

footer { flex: none; display: flex; align-items: center; height: 36px; padding-left: 6px; border-top: 2px solid #999; margin-right: -4px; }
.sbtn { width: 22px; height: 22px; margin-right: 4px; display: grid; place-items: center; border: 1px solid #ccc; }
.sbtn.on { border-top: 2px solid #999; background: linear-gradient(#fff 70%, #ccc); }
.sbtn svg { width: 16px; height: 16px; }
.sbtn + .bar { margin-left: 5px; }
.push { flex: 1; }
.cell { width: 29px; }
.lights { width: 35px; display: flex; align-items: center; padding-left: 5px; gap: 1px; }
.lights i { width: 7px; height: 7px; border-radius: 50%; background: #ccc; }
.lights i:first-child { width: 11px; height: 11px; background: #3c3; }
.flag { width: 40px; padding-left: 4px; }
.flag svg { width: 16px; height: 16px; }
.find svg { width: 18px; height: 18px; }
.find { width: 40px; height: 25px; margin: 0 2px; border: 1px solid #ccc; border-radius: 4px; display: grid; place-items: center; }
.filter { position: relative; width: 176px; margin: 0 18px 0 97px; }
.filter select { display: block; width: 100%; height: 19px; padding: 0 6px; border: 1px solid #ccc; background: #fff; appearance: none; font: inherit; color: inherit; }
.filter .caret { position: absolute; right: 4px; top: 8px; }

.gif {
  position: absolute; top: 0; right: 0; width: 170px; height: 440px; padding: 0 6px 6px; border: 1px solid #133; border-radius: 6px;
  background: linear-gradient(#ccf 0, #bff 30px, #ccf 60px, #9cc 200px, #69a 300px, #9cd 430px); box-shadow: inset 0 0 0 1px #cef;
  font: bold 12px/16px "Liberation Sans", "Noto Sans CJK SC", sans-serif; color: #000; display: flex; flex-direction: column;
}
.gtitle { display: flex; align-items: flex-start; height: 27px; font: 12px/18px "Noto Sans", sans-serif; flex: none; }
.gtitle > svg { width: 16px; height: 16px; margin: 5px 5px 0 0; }
.gtitle > span { margin-top: 4px; white-space: nowrap; }
.wbtns { display: flex; margin-left: auto; height: 18px; }
.wbtns button { width: 27px; border: 1px solid #667; border-top: 0; background: #cde; display: grid; place-items: center; }
.wbtns button:first-child { border-radius: 0 0 0 4px; }
.wbtns .x { width: 48px; background: linear-gradient(#daa, #b32 50%, #c66); border-radius: 0 0 4px 0; }
.wbtns svg { width: 12px; height: 12px; }
.min { width: 12px; height: 4px; background: #fff; border: 1px solid #555; }
.max { width: 10px; height: 8px; background: #fff; border: 2px solid #999; }
.client { flex: 1; background: #fff; border: 1px solid #366; }
.gmenu { height: 20px; padding-left: 59px; background: linear-gradient(#fff 30%, #ccf 30% 80%, #fff 80%); font-weight: 400; }
.gmenu a { color: #777; text-decoration: none; line-height: 20px; }
.gbody { padding: 4px 4px 0 3px; display: flex; flex-direction: column; }
.reg { height: 26px; line-height: 20px; text-align: center; border: 3px double #000; border-width: 3px 0; }
.btns { display: flex; gap: 2px; margin-top: 3px; }
.gbody button { width: 45px; height: 21px; font-weight: bold; background: #fff; border: 1px solid #ccc; border-right: 2px solid #777; border-bottom: 2px solid #777; }
.gbody button:disabled { color: #999; }
.frames { line-height: 18px; }
.legend { display: flex; align-items: center; gap: 3px; margin-top: 14px; line-height: 14px; }
.legend::before, .legend::after { content: ""; height: 1px; width: 10px; background: #000; }
.legend::after { flex: 1; }
.line { line-height: 15px; }
.area { display: flex; align-items: center; justify-content: space-between; margin-top: 2px; height: 22px; }
.gbody .area button { width: 70px; }
.gbody .refresh { width: 71px; margin-top: 2px; }
.legend.second { margin-top: 20px; }
.area label, .opt { display: flex; align-items: center; gap: 5px; padding-left: 2px; white-space: nowrap; }
.opt { height: 22px; }
input { appearance: none; position: relative; width: 15px; height: 15px; margin: 0; border: 1px solid #ccc; border-top: 2px solid #666; border-left: 2px solid #666; background: #fff; }
input:checked::after { content: ""; position: absolute; left: 3px; top: 0; width: 4px; height: 8px; border: solid #000; border-width: 0 2px 2px 0; transform: rotate(40deg); }
.pick { display: flex; align-items: center; height: 20px; }
.pick label { width: 60px; white-space: nowrap; }
.sel { position: relative; width: 62px; }
.sel select { display: block; width: 100%; height: 17px; padding: 0 12px; border: 1px solid #000; box-shadow: 2px 2px 0 #000; background: #fff; appearance: none; font: inherit; color: #000; border-radius: 0; }
.sel i { position: absolute; right: 3px; top: 0; font-style: normal; font-size: 11px; pointer-events: none; }
.scale label { width: 67px; }
.scale .sel { width: 57px; }

.upload { position: absolute; top: 26px; right: 107px; width: 103px; height: 25px; display: flex; border: 1px solid #69c; border-radius: 3px; overflow: hidden; background: linear-gradient(90deg, #bff, #ccf); box-shadow: 0 1px 2px #999; color: #579; }
.cloud { width: 30px; background: #39e; display: grid; place-items: center; }
.cloud svg { width: 24px; height: 20px; }
.txt { flex: 1; line-height: 24px; }

.net { position: absolute; right: 33px; bottom: 9px; display: flex; align-items: center; color: #fff; font: 12px/21px "Noto Sans", sans-serif; }
.rates { width: 84px; height: 42px; margin-right: -24px; padding-left: 10px; border-radius: 21px 0 0 21px; background: #333; box-shadow: 0 0 0 3px rgb(200 160 170 / 80%); }
.rates i { display: inline-block; width: 13px; font: bold 12px/16px "DejaVu Sans", sans-serif; }
.rates small { font-size: 10px; color: #999; }
.up { color: #6cf; } .down { color: #3b3; }
.dial { position: relative; width: 60px; height: 60px; border-radius: 50%; background: #666; border: 1px solid #333; box-shadow: 0 0 0 3px rgb(200 170 180 / 70%); display: grid; place-items: center; }
.dial svg { position: absolute; inset: 0; width: 58px; height: 58px; }
.dial span { font: 300 26px/30px "Open Sans", "Noto Sans", sans-serif; }
.dial small { font-size: 10px; }
.blob { position: absolute; right: -35px; bottom: 37px; width: 44px; height: 44px; border-radius: 50%; background: #3c3; border: 1px solid #555; box-shadow: 0 0 0 2px rgb(200 170 180 / 70%); }
</style>
